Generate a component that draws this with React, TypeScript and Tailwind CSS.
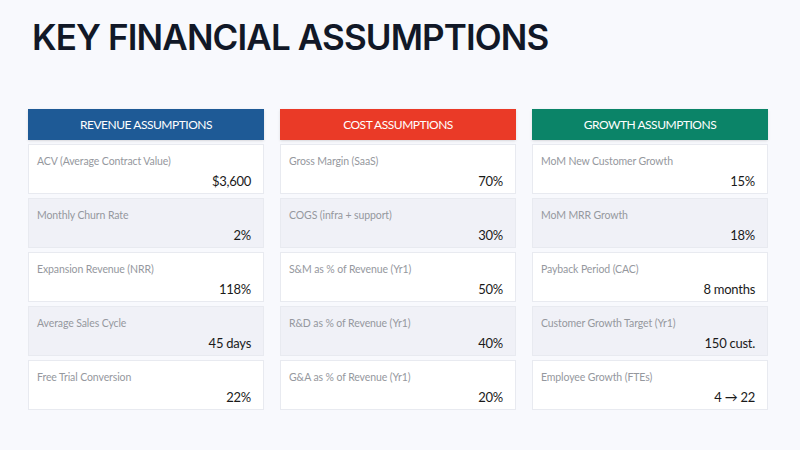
import React from 'react';

type Row = { label: string; value: string };

interface Group {
  title: string;
  color: string;
  rows: Row[];
}

const groups: Group[] = [
  {
    title: 'Revenue Assumptions',
    color: 'bg-[#1e5a96]',
    rows: [
      { label: 'ACV (Average Contract Value)', value: '$3,600' },
      { label: 'Monthly Churn Rate', value: '2%' },
      { label: 'Expansion Revenue (NRR)', value: '118%' },
      { label: 'Average Sales Cycle', value: '45 days' },
      { label: 'Free Trial Conversion', value: '22%' },
    ],
  },
  {
    title: 'Cost Assumptions',
    color: 'bg-[#ea3a27]',
    rows: [
      { label: 'Gross Margin (SaaS)', value: '70%' },
      { label: 'COGS (infra + support)', value: '30%' },
      { label: 'S&M as % of Revenue (Yr1)', value: '50%' },
      { label: 'R&D as % of Revenue (Yr1)', value: '40%' },
      { label: 'G&A as % of Revenue (Yr1)', value: '20%' },
    ],
  },
  {
    title: 'Growth Assumptions',
    color: 'bg-[#0b8468]',
    rows: [
      { label: 'MoM New Customer Growth', value: '15%' },
      { label: 'MoM MRR Growth', value: '18%' },
      { label: 'Payback Period (CAC)', value: '8 months' },
      { label: 'Customer Growth Target (Yr1)', value: '150 cust.' },
      { label: 'Employee Growth (FTEs)', value: '4 → 22' },
    ],
  },
];

const App: React.FC = () => {
  return (
    <div className="w-[800px] h-[450px] bg-[#f8f9fd] overflow-hidden px-[28px] pt-[20px]">
      <h1 className="pl-[4px] text-[35px] leading-none font-semibold tracking-[-0.025em] text-[#111827] font-['Inter',sans-serif]">
        KEY FINANCIAL ASSUMPTIONS
      </h1>

      <div className="mt-[54px] grid grid-cols-[236px_236px_236px] gap-4 font-['Lato','Open_Sans',sans-serif]">
        {groups.map((g) => (
          <div key={g.title} className="flex flex-col gap-[4px]">
            <div className={`${g.color} h-[31px] flex items-center justify-center text-white text-[12px] uppercase tracking-[-0.04em] shadow-sm`}>
              {g.title}
            </div>
            {g.rows.map((r, i) => (
              <div
                key={r.label}
                className={`h-[50px] border border-[#e8eaf0] pl-[8px] pr-[12px] pt-[9px] flex flex-col ${
                  i % 2 === 1 ? 'bg-[#f0f1f7]' : 'bg-white'
                }`}
              >
                <span className="text-[10.5px] leading-[14px] text-[#95989e] tracking-[-0.01em] whitespace-nowrap">{r.label}</span>
                <span className="mt-[5px] text-right text-[13px] leading-[17px] text-[#1a1a1a] tracking-[-0.02em]">{r.value}</span>
              </div>
            ))}
          </div>
        ))}
      </div>
    </div>
  );
};

export default App;
